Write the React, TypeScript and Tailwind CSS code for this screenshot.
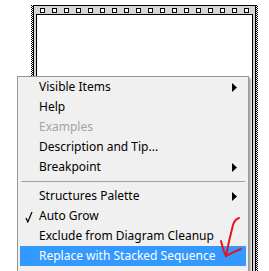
import React from 'react'

interface MenuItem {
  label: string
  submenu?: boolean
  disabled?: boolean
  checked?: boolean
  active?: boolean
}

const groupA: MenuItem[] = [
  { label: 'Visible Items', submenu: true },
  { label: 'Help' },
  { label: 'Examples', disabled: true },
  { label: 'Description and Tip...' },
  { label: 'Breakpoint', submenu: true },
]

const groupB: MenuItem[] = [
  { label: 'Structures Palette', submenu: true },
  { label: 'Auto Grow', checked: true },
  { label: 'Exclude from Diagram Cleanup' },
  { label: 'Replace with Stacked Sequence', active: true },
  { label: 'Remove Sequence' },
]

// selection marquee: 2px wide checker strip
const Marquee = () => (
  <div className="flex w-[2px] shrink-0">
    <div className="w-px bg-[repeating-linear-gradient(to_bottom,#000_0_1px,#fff_1px_2px)]" />
    <div className="w-px bg-[repeating-linear-gradient(to_bottom,#fff_0_1px,#000_1px_2px)]" />
  </div>
)

const Arrow = ({ white }: { white?: boolean }) => (
  <svg width="5" height="9" viewBox="0 0 5 9" className="shrink-0">
    <path d="M0 0 L5 4.5 L0 9 Z" fill={white ? '#fff' : '#000'} />
  </svg>
)

const Check = () => (
  <svg width="8" height="12" viewBox="0 0 8 12" className="absolute left-[5px] top-[5px]">
    <path d="M1 7 L2.8 11 L7 1" stroke="#000" strokeWidth="1.2" fill="none" />
  </svg>
)

const Row = ({ item }: { item: MenuItem }) => (
  <div
    className={
      'relative flex h-[20px] items-center pl-[19px] pr-[9px] ' +
      (item.active ? 'bg-[#3399ff] text-white' : item.disabled ? 'text-[#a3a3a3]' : 'text-black')
    }>
    {item.checked && <Check />}
    <span className="flex-1 whitespace-nowrap">{item.label}</span>
    {item.submenu && <Arrow white={item.active} />}
  </div>
)

export default function App() {
  return (
    <div className="relative h-[271px] w-[269px] overflow-hidden bg-white font-['Noto_Sans',sans-serif] text-[12px]">
      {/* sequence frame on the diagram */}
      <div className="ml-[31px] flex h-[300px] w-[227px] pt-[5px]">
        <Marquee />
        <div className="flex flex-1 flex-col border-x border-t border-black bg-[#d6d6d6]">
          <div className="flex h-[8px] items-center gap-[7px] pl-[6px]">
            {Array.from({ length: 18 }).map((_, i) => (
              <div key={i} className="h-[5px] w-[5px] shrink-0 border border-black bg-white" />
            ))}
          </div>
          <div className="mx-[2px] flex-1 border-x border-t border-black bg-white" />
        </div>
        <Marquee />
      </div>

      {/* context menu */}
      <div className="absolute left-[17px] top-[76px] w-[232px] border border-[#979797] bg-[#f0f0f0] px-[2px] shadow-[2px_2px_2px_rgba(0,0,0,0.35)]">
        {groupA.map((it) => (
          <Row key={it.label} item={it} />
        ))}
        <div className="flex h-[9px] items-center px-px">
          <div className="h-px flex-1 bg-[#a0a0a0]" />
        </div>
        {groupB.map((it) => (
          <Row key={it.label} item={it} />
        ))}
      </div>

      {/* red hand-drawn annotation */}
      <svg width="269" height="271" className="pointer-events-none absolute left-0 top-0">
        <path
          d="M239 218 Q235 219 233 225 Q229 240 226 256"
          stroke="#e8141c"
          strokeWidth="2"
          fill="none"
          strokeLinecap="round"
        />
        <path
          d="M221 241 Q223 250 226 256 Q233 252 241 249"
          stroke="#e8141c"
          strokeWidth="2"
          fill="none"
          strokeLinecap="round"
        />
      </svg>
    </div>
  )
}
